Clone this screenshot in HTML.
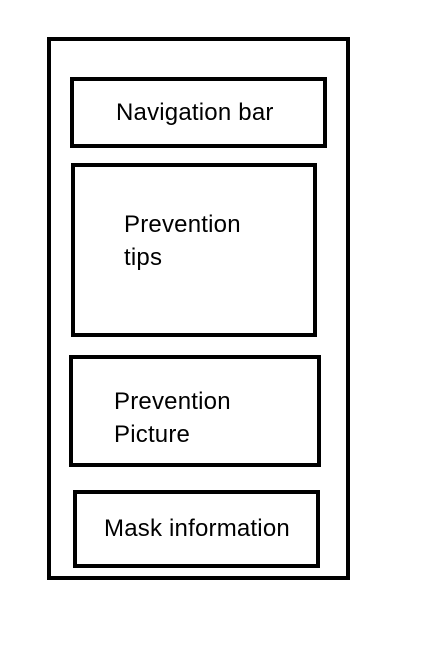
<!DOCTYPE html>
<html><head><meta charset="utf-8"><style>
html,body{margin:0;padding:0;background:#fff;width:440px;height:648px;overflow:hidden}
.b{position:absolute;box-sizing:border-box;border:4px solid #000}
.t{position:absolute;font-family:"Liberation Sans",sans-serif;font-size:24px;letter-spacing:0.2px;color:#000;line-height:33px}
</style></head><body>
<div class="b" style="left:47px;top:37px;width:303px;height:543px"></div>
<div class="b" style="left:70px;top:77px;width:257px;height:71px"></div>
<div class="b" style="left:71px;top:163px;width:246px;height:174px"></div>
<div class="b" style="left:69px;top:355px;width:252px;height:112px"></div>
<div class="b" style="left:73px;top:490px;width:247px;height:78px"></div>
<div class="t" style="left:116px;top:96px">Navigation bar</div>
<div class="t" style="left:124px;top:208px">Prevention<br>tips</div>
<div class="t" style="left:114px;top:385px">Prevention<br>Picture</div>
<div class="t" style="left:104px;top:512px">Mask information</div>
</body></html>
